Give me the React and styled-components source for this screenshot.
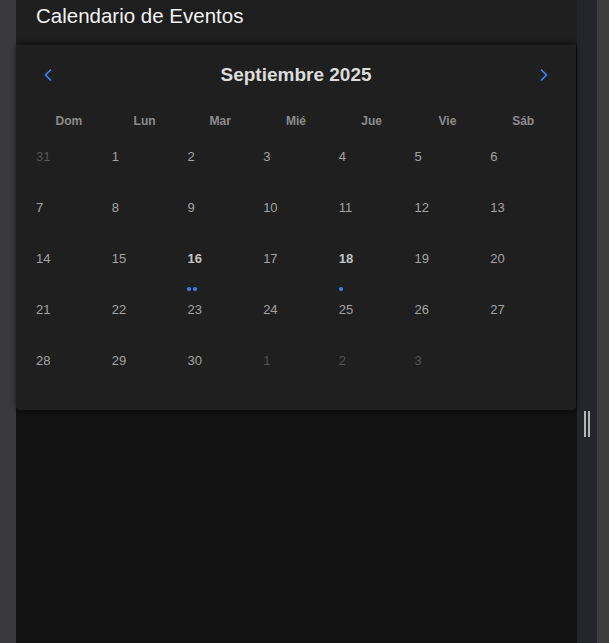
import React from "react";
import styled, { createGlobalStyle } from "styled-components";

const Global = createGlobalStyle`
  html, body { margin: 0; padding: 0; background: #121212; height: 100%; }
  body { font-family: "Liberation Sans", Arial, sans-serif; overflow: hidden; }
  #root { height: 100%; }
`;

const Shell = styled.div`
  display: flex;
  height: 643px;
  width: 609px;
`;

const LeftStrip = styled.div`
  width: 16px;
  flex: none;
  background: #3a3a3c;
`;

const Main = styled.main`
  flex: 1;
  display: flex;
  flex-direction: column;
  background: #121212;
  min-width: 0;
`;

const Header = styled.header`
  height: 45px;
  box-sizing: border-box;
  padding: 4px 20px 0;
  background: #1e1e1e;
  flex: none;
`;

const Title = styled.h1`
  margin: 0;
  font-family: "Liberation Sans", Arial, sans-serif;
  font-weight: 400;
  font-size: 20.5px;
  line-height: 24px;
  color: #f2f2f2;
`;

const Card = styled.section`
  background: #1f1f1f;
  padding: 16px 20px;
  border-radius: 0 0 4px 4px;
  box-shadow: 0 -2px 4px rgba(0, 0, 0, 0.35), 0 2px 4px rgba(0, 0, 0, 0.3);
  margin-right: 1px;
  position: relative;
`;

const Nav = styled.div`
  display: flex;
  align-items: center;
  justify-content: space-between;
  height: 28px;
  margin-bottom: 17px;
`;

const NavButton = styled.button`
  width: 24px;
  height: 28px;
  padding: 0;
  border: none;
  background: transparent;
  display: flex;
  align-items: center;
  justify-content: center;
  color: #3b82f6;
  cursor: pointer;
`;

const Month = styled.h2`
  margin: 0;
  font-size: 19px;
  font-weight: 700;
  color: #dcdcdc;
  line-height: 22px;
`;

const Grid = styled.div`
  display: grid;
  grid-template-columns: repeat(7, 1fr);
  column-gap: 10px;
`;

const WeekRow = styled(Grid)`
  height: 30px;
  align-items: center;
  margin-bottom: 8px;
`;

const WeekDay = styled.div`
  text-align: center;
  font-size: 12px;
  font-weight: 700;
  color: #8c8c8c;
`;

const DaysGrid = styled(Grid)`
  row-gap: 5px;
`;

const Cell = styled.div`
  height: 46px;
  box-sizing: border-box;
  padding: 5px 0 0;
  display: flex;
  flex-direction: column;
  justify-content: space-between;
`;

const DayNum = styled.span`
  font-size: 13px;
  line-height: 16px;
  font-weight: ${(p) => (p.$bold ? 700 : 400)};
  color: ${(p) => (p.$muted ? "#555555" : p.$bold ? "#c4c4c4" : "#a4a4a4")};
`;

const Dots = styled.div`
  display: flex;
  gap: 2px;
  height: 4px;
  padding-bottom: 1px;
`;

const Dot = styled.span`
  width: 4px;
  height: 4px;
  border-radius: 50%;
  background: #3b82f6;
`;

const RightGutter = styled.div`
  width: 20px;
  flex: none;
  background: #25262b;
  display: flex;
  justify-content: center;
  padding-top: 411px;
  box-sizing: border-box;
`;

const Grip = styled.div`
  width: 6px;
  height: 26px;
  border-left: 2px solid #b4b4b4;
  border-right: 2px solid #b4b4b4;
  box-sizing: border-box;
  margin-left: -1px;
`;

const Scrollbar = styled.div`
  width: 12px;
  flex: none;
  background: #3c3c3f;
`;

const Chevron = ({ dir }) => (
  <svg width="10" height="12" viewBox="0 0 10 12" fill="none">
    <polyline
      points={dir === "left" ? "7.5,1 2.5,6 7.5,11" : "2.5,1 7.5,6 2.5,11"}
      stroke="currentColor"
      strokeWidth="1.7"
      strokeLinecap="round"
      strokeLinejoin="round"
    />
  </svg>
);

const weekdays = ["Dom", "Lun", "Mar", "Mié", "Jue", "Vie", "Sáb"];

const days = [
  { n: 31, muted: true },
  ...Array.from({ length: 30 }, (_, i) => ({ n: i + 1 })),
  { n: 1, muted: true },
  { n: 2, muted: true },
  { n: 3, muted: true },
];

const events = { 16: 2, 18: 1 };

export default function App() {
  return (
    <>
      <Global />
      <Shell>
        <LeftStrip />
        <Main>
          <Header>
            <Title>Calendario de Eventos</Title>
          </Header>
          <Card>
            <Nav>
              <NavButton aria-label="Mes anterior">
                <Chevron dir="left" />
              </NavButton>
              <Month>Septiembre 2025</Month>
              <NavButton aria-label="Mes siguiente">
                <Chevron dir="right" />
              </NavButton>
            </Nav>
            <WeekRow>
              {weekdays.map((w) => (
                <WeekDay key={w}>{w}</WeekDay>
              ))}
            </WeekRow>
            <DaysGrid>
              {days.map((d, i) => {
                const count = !d.muted ? events[d.n] || 0 : 0;
                return (
                  <Cell key={i}>
                    <DayNum $muted={d.muted} $bold={count > 0}>
                      {d.n}
                    </DayNum>
                    {count > 0 && (
                      <Dots>
                        {Array.from({ length: count }, (_, k) => (
                          <Dot key={k} />
                        ))}
                      </Dots>
                    )}
                  </Cell>
                );
              })}
            </DaysGrid>
          </Card>
        </Main>
        <RightGutter>
          <Grip />
        </RightGutter>
        <Scrollbar />
      </Shell>
    </>
  );
}
